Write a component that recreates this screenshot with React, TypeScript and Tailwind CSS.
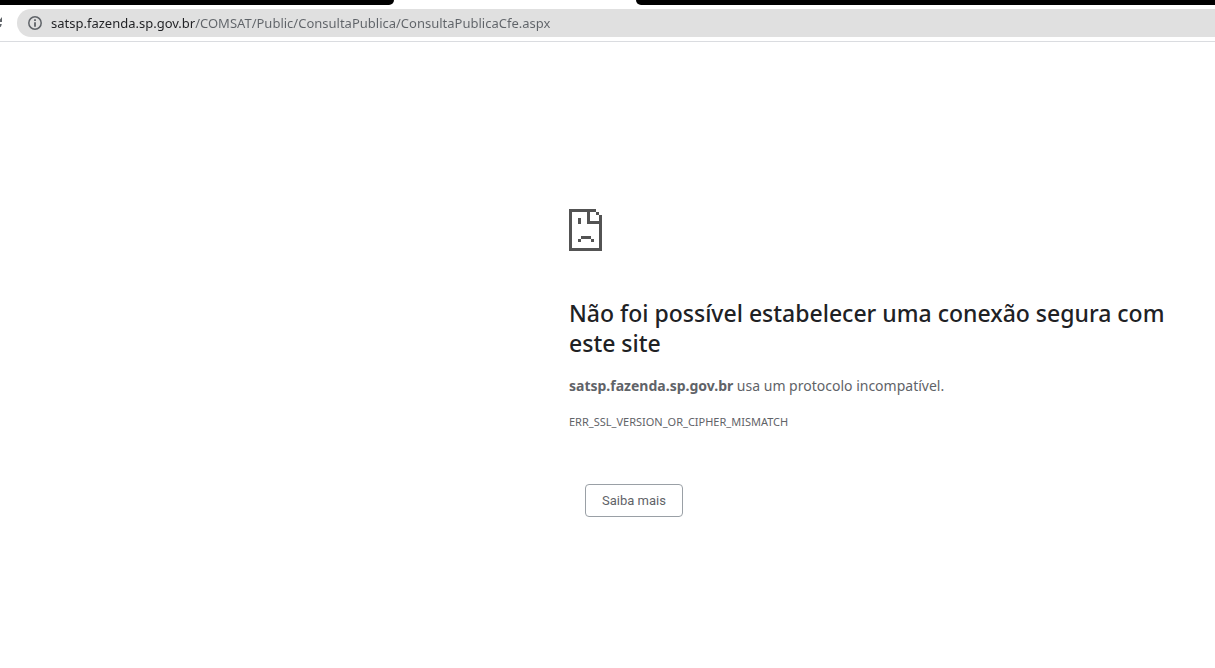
import React from 'react';

const SITE_HOST = 'satsp.fazenda.sp.gov.br';
const SITE_PATH = '/COMSAT/Public/ConsultaPublica/ConsultaPublicaCfe.aspx';

const TabStrip: React.FC = () => {
  return (
    <div className="flex h-[5px] bg-white">
      <div className="w-[394px] rounded-br-md bg-black" />
      <div className="w-[242px]" />
      <div className="flex-1 rounded-bl-md bg-black" />
    </div>
  );
};

const ReloadIcon: React.FC = () => {
  return (
    <svg viewBox="0 0 2 14" className="h-[14px] w-[2px]" fill="#5f6368" aria-hidden="true">
      <path d="M2 1v5H-3L0 3.600z" />
      <path d="M-2 8H1.800L1 10.500L-1 12z" />
    </svg>
  );
};

const InfoIcon: React.FC = () => {
  return (
    <svg viewBox="0 0 14 14" className="size-[14px]" aria-hidden="true">
      <circle cx="7" cy="7" r="6.200" fill="none" stroke="#5f6368" strokeWidth="1.500" />
      <path d="M6.100 3.300h1.800v1.800H6.100zM6.100 6.200h1.800v4.500H6.100z" fill="#5f6368" />
    </svg>
  );
};

const Toolbar: React.FC = () => {
  return (
    <div className="flex items-center border-b border-[#dadce0] bg-white py-1">
      <button type="button" aria-label="Recarregar" className="mr-[15px]">
        <ReloadIcon />
      </button>
      <div className="flex h-7 flex-1 items-center gap-[9px] rounded-l-full bg-[#e0e0e0] pl-[11px]">
        <InfoIcon />
        <input
          type="text"
          aria-label="Endereço"
          defaultValue={SITE_HOST + SITE_PATH}
          className="h-7 min-w-0 flex-1 bg-[linear-gradient(to_right,#202124_144px,#5f6368_144px)] bg-clip-text text-[13px] text-transparent outline-none"
        />
      </div>
    </div>
  );
};

const SadPageIcon: React.FC = () => {
  return (
    <svg viewBox="0 0 33 42" className="h-[42px] w-[33px]" fill="#535353" shapeRendering="crispEdges" aria-hidden="true">
      <path d="M0 0h27v3h-6v9h9V6h3v36H0zM3 3v36h27V15H18V3z" fillRule="evenodd" />
      <path d="M27 3h3v3h-3zM9 9h3v6H9zM12 27h10v3H12zM9 30h3v3H9zM22 30h3v3h-3z" />
    </svg>
  );
};

const App: React.FC = () => {
  return (
    <div className="min-h-screen bg-white font-['Noto_Sans','Open_Sans',sans-serif]">
      <TabStrip />
      <Toolbar />
      <main className="ml-[569px] max-w-[600px] pt-[167px] text-[#5f6368]">
        <SadPageIcon />
        <h1 className="mt-[47px] text-[23px] leading-[30px] font-medium text-[#202124]">
          Não foi possível estabelecer uma conexão segura com este site
        </h1>
        <p className="mt-4 text-[14px] leading-6">
          <strong>{SITE_HOST}</strong> usa um protocolo incompatível.
        </p>
        <p className="mt-3 text-[11px] leading-6">ERR_SSL_VERSION_OR_CIPHER_MISMATCH</p>
        <button
          type="button"
          className="mt-[50px] ml-4 rounded border border-[#9aa0a6] px-4 py-[5px] font-[Roboto,sans-serif] text-[13px] leading-[21px]"
        >
          Saiba mais
        </button>
      </main>
    </div>
  );
};

export default App;
